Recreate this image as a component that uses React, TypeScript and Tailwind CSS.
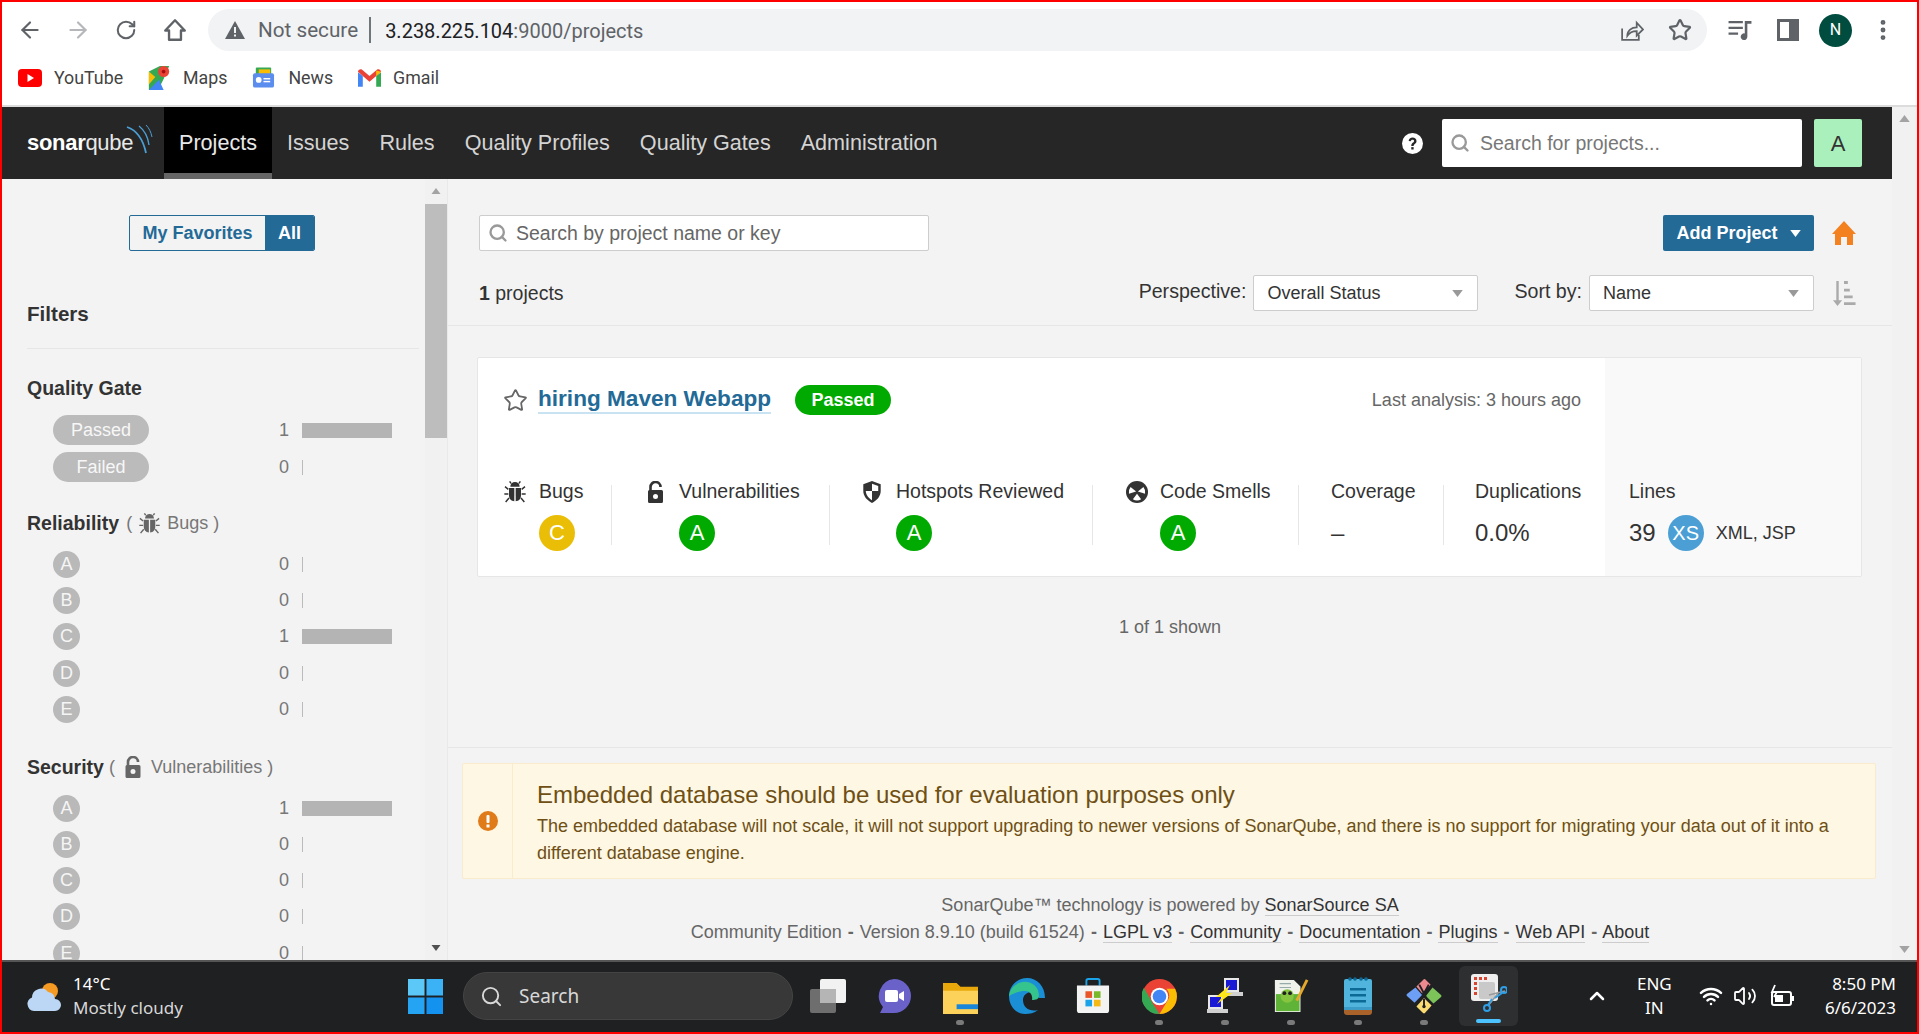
import React from "react";
import { ArrowLeft, ArrowRight, RotateCw, Star, Search, ChevronUp, Volume2, Wifi, MoreVertical } from "lucide-react";

const Tri = ({ up = false, className = "" }: { up?: boolean; className?: string }) => (
  <svg viewBox="0 0 12 8" className={className}><path d={up ? "M6 0l6 8H0z" : "M0 0h12L6 8z"} fill="currentColor" /></svg>
);

const BugIcon = ({ className = "" }: { className?: string }) => (
  <svg viewBox="0 0 18 18" className={className} fill="currentColor">
    <path d="M5.5 5a3.5 3.5 0 0 1 7 0z" />
    <path d="M4.5 6h4v10c-2.4-.2-4-1.8-4-4.500z" />
    <path d="M9.500 6h4v5.500c0 2.700-1.600 4.300-4 4.500z" />
    <path d="M4 7L1.500 5M14 7l2.500-2M4 10.500H1M14 10.500h3M4.500 13.500L2 16.500M13.500 13.500l2.500 3M6 2.500L5 1M12 2.500l1-1.500" stroke="currentColor" strokeWidth="1.100" fill="none" />
  </svg>
);
const LockIcon = ({ className = "" }: { className?: string }) => (
  <svg viewBox="0 0 16 22" className={className}>
    <path d="M3 10V6a5 5 0 0 1 10 0" stroke="currentColor" strokeWidth="2.600" fill="none" />
    <path fillRule="evenodd" fill="currentColor" d="M2 9h12a1.500 1.500 0 0 1 1.500 1.500v10A1.500 1.500 0 0 1 14 22H2a1.500 1.500 0 0 1-1.500-1.500v-10A1.500 1.500 0 0 1 2 9zm6 4a2.500 2.500 0 1 0 0 5 2.500 2.500 0 0 0 0-5z" />
  </svg>
);
const ShieldIcon = ({ className = "" }: { className?: string }) => (
  <svg viewBox="0 0 20 24" className={className}>
    <path d="M10 0l9.500 3.500V11c0 6-4.500 10.500-9.500 13C5 21.500.5 17 .5 11V3.500z" fill="currentColor" />
    <path d="M10 3l6.800 2.500V11H10zM10 11v10C6.500 19 3.500 15.500 3.200 11z" fill="#fff" />
  </svg>
);
const SmellIcon = ({ className = "" }: { className?: string }) => (
  <svg viewBox="0 0 24 24" className={className}>
    <circle cx="12" cy="12" r="12" fill="currentColor" />
    <path d="M11 11.500L3.200 14A9 9 0 0 1 5 6.500zM13 11.500L20.800 14A9 9 0 0 0 19 6.500zM12 14L7.500 20a9 9 0 0 0 9 0z" fill="#fff" />
  </svg>
);
const SortIcon = ({ className = "" }: { className?: string }) => (
  <svg viewBox="0 0 24 26" className={className} fill="currentColor">
    <path d="M4 0h2.500v20H10l-4.700 6L.5 20H4z" />
    <path d="M12 0h4v3h-4zM12 8h6v3h-6zM12 15h9v3h-9zM12 22h12v3H12z" />
  </svg>
);
const QMark = ({ className = "" }: { className?: string }) => (
  <svg viewBox="0 0 22 22" className={className}>
    <circle cx="11" cy="11" r="11" fill="#fff" />
    <path d="M7 8.500C7 6 9 4.700 11 4.700c2.400 0 4.200 1.400 4.200 3.700 0 3-3 3-3 5.300H9.700c0-3.500 3-3.500 3-5.200 0-1-.8-1.500-1.700-1.500-1 0-1.700.6-1.800 1.700z" fill="#262626" />
    <rect x="9.700" y="14.800" width="2.500" height="2.500" fill="#262626" />
  </svg>
);

const Rating = ({ l, c = "bg-[#00aa00]" }: { l: string; c?: string }) => (
  <span className={`flex h-9 w-9 items-center justify-center rounded-full text-[22px] leading-none text-white ${c}`}>{l}</span>
);

const Facet = ({ label, n }: { label: React.ReactNode; n: number }) => (
  <div className="flex h-[36.200px] items-center pl-[26px]">
    <div className="w-[222px]">{label}</div>
    <span className="w-[14px] text-right text-[18px] text-[#777]">{n}</span>
    <span className="ml-[13px] flex h-[15px] items-center">
      {n ? <span className="h-[15px] w-[90px] bg-[#b4b4b4]" /> : <span className="h-[15px] w-px bg-[#bbb]" />}
    </span>
  </div>
);
const RatingDot = ({ l }: { l: string }) => (
  <span className="flex h-[27px] w-[27px] items-center justify-center rounded-full bg-[#b9b9b9] text-[18px] text-[#f5f5f5]">{l}</span>
);
const GatePill = ({ t }: { t: string }) => (
  <span className="flex h-[30px] w-[96px] items-center justify-center rounded-full bg-[#bbb] text-[18px] text-[#f7f7f7]">{t}</span>
);

const RatingGroup = ({ counts }: { counts: number[] }) => (
  <div className="mt-[11px]">
    {["A", "B", "C", "D", "E"].map((l, i) => (
      <Facet key={l} label={<RatingDot l={l} />} n={counts[i]} />
    ))}
  </div>
);

const Metric = ({ w, label, icon, value, iconGap = "gap-[14px]", last = false }: { w: string; label: string; icon?: React.ReactNode; value: React.ReactNode; iconGap?: string; last?: boolean }) => (
  <div className={`h-[60px] ${w} ${last ? "" : "border-r border-[#e6e6e6]"}`}>
    <div className={`flex h-[14px] items-center ${iconGap} text-[19.500px] text-[#333]`}>
      {icon}
      <span className="whitespace-nowrap">{label}</span>
    </div>
    <div className="mt-[16px]">{value}</div>
  </div>
);

const FLink = ({ t }: { t: string }) => <span className="border-b border-[#ccc] text-[#333]">{t}</span>;
const Sep = () => <span className="mx-[1px] font-bold">-</span>;

const Icon = ({ children, dot = false }: { children: React.ReactNode; dot?: boolean }) => (
  <div className="relative flex h-[60px] w-[66.200px] items-center justify-center">
    {children}
    {dot && <span className="absolute bottom-[1px] h-[5px] w-[8px] rounded-full bg-[#7a7a7a]" />}
  </div>
);

export default function App() {
  return (
    <div className="flex h-[1034px] w-[1919px] flex-col overflow-hidden border-2 border-[#ff0000] bg-white font-['Liberation_Sans',Arial,sans-serif] text-[#333]">
      {/* Browser chrome */}
      <div className="h-[105px] shrink-0 border-b-2 border-[#dcdcdc] font-['Roboto',sans-serif]">
        <div className="flex h-[49px] items-end">
          <div className="flex h-[42px] w-[206px] items-center text-[#5f6368]">
            <ArrowLeft className="ml-[15px] h-[26px] w-[26px]" strokeWidth={2} />
            <ArrowRight className="ml-[22px] h-[26px] w-[26px] text-[#b5b7ba]" strokeWidth={2} />
            <RotateCw className="ml-[24px] h-[22px] w-[22px]" strokeWidth={2.200} />
            <svg viewBox="0 0 24 24" className="ml-[25px] h-[26px] w-[26px]" fill="none" stroke="currentColor" strokeWidth="2.200" strokeLinejoin="round"><path d="M12 3l9 9.500h-3.500V21h-11v-8.500H3z" /></svg>
          </div>
          <div className="flex h-[42px] w-[1499px] items-center rounded-full bg-[#f1f3f4] pl-[17px]">
            <svg viewBox="0 0 20 18" className="h-[18px] w-[20px] text-[#5f6368]"><path fill="currentColor" d="M10 0l10 18H0z" /><path fill="#f1f3f4" d="M9 6h2v6H9zM9 13.500h2v2H9z" /></svg>
            <span className="ml-[13px] pt-[2px] text-[20.700px] text-[#5f6368]">Not secure</span>
            <span className="ml-[11px] h-[26px] w-[2px] bg-[#70757a]" />
            <span className="ml-[14px] pt-[2px] text-[20px] text-[#202124]">3.238.225.104<span className="text-[#5f6368]">:9000/projects</span></span>
            <div className="ml-auto flex items-center text-[#5f6368]">
              <svg viewBox="0 0 24 24" className="h-[25px] w-[25px]" fill="none" stroke="currentColor" strokeWidth="1.700"><path d="M3 10v11h16v-5" /><path d="M8 17c0-5 4-8 9-8V4.500l6 6.500-6 6v-4.500c-4 0-7 1.500-9 4.500z" /></svg>
              <Star className="ml-[24px] mr-[15px] h-[24px] w-[24px]" strokeWidth={2.200} />
            </div>
          </div>
          <div className="flex h-[42px] flex-1 items-center text-[#5f6368]">
            <svg viewBox="0 0 24 22" className="ml-[21px] h-[21px] w-[24px]" fill="currentColor"><path d="M0 1h15v2.500H0zM0 7h15v2.500H0zM0 13h10v2.500H0z" /><path d="M17 1h7v3h-4.300v13.500a3.500 3.500 0 1 1-2.700-3.400z" /></svg>
            <svg viewBox="0 0 22 22" className="ml-[25px] h-[22px] w-[22px]" fill="currentColor"><path fillRule="evenodd" d="M0 0h22v22H0zM3 3v16h9V3z" /></svg>
            <span className="ml-[20px] flex h-[33px] w-[33px] items-center justify-center rounded-full bg-[#004d40] text-[16px] text-white">N</span>
            <MoreVertical className="ml-[18px] h-[26px] w-[26px]" strokeWidth={2.500} />
          </div>
        </div>
        <div className="flex h-[54px] items-center text-[17.800px] text-[#444]">
          <svg viewBox="0 0 24 18" className="ml-[16px] h-[18px] w-[24px]"><rect width="24" height="18" rx="4" fill="#f00" /><path d="M9.500 5l6.500 4-6.500 4z" fill="#fff" /></svg>
          <span className="ml-[12px]">YouTube</span>
          <svg viewBox="0 0 22 26" className="ml-[25px] h-[24px] w-[22px]"><path d="M0 6l12-6 10 0-6 14-6 12H0z" fill="#34a853" /><path d="M0 26l11-11 5 11z" fill="#4285f4" /><path d="M0 6l7 6L0 20z" fill="#fbbc04" /><circle cx="16" cy="6" r="6" fill="#ea4335" /><circle cx="16" cy="6" r="2" fill="#a50e0e" /></svg>
          <span className="ml-[13px]">Maps</span>
          <svg viewBox="0 0 24 24" className="ml-[25px] h-[24px] w-[23px]"><rect x="4" y="1" width="16" height="8" rx="1" fill="#34a853" /><rect x="7" y="3" width="12" height="7" fill="#fbbc04" /><rect x="1" y="7" width="22" height="15" rx="2" fill="#5b8def" /><rect x="12" y="12" width="7" height="1.500" fill="#fff" /><rect x="12" y="15" width="7" height="1.500" fill="#fff" /><circle cx="7" cy="14" r="3" fill="#fff" /></svg>
          <span className="ml-[13px]">News</span>
          <svg viewBox="0 0 24 18" className="ml-[25px] h-[18px] w-[23px]"><path d="M0 3v15h5V7z" fill="#4285f4" /><path d="M24 3v15h-5V7z" fill="#34a853" /><path d="M0 2.500C0 .5 2.500-.8 4.300.5L12 7l7.700-6.500C21.500-.8 24 .5 24 2.500L19 7l-7 6-7-6z" fill="#ea4335" /><path d="M19 1.200l5 1.300L19 7z" fill="#fbbc04" /></svg>
          <span className="ml-[12px]">Gmail</span>
        </div>
      </div>

      {/* Page */}
      <div className="flex min-h-0 flex-1">
        <div className="flex w-[1890px] flex-col">
          {/* Sonar header */}
          <header className="flex h-[72px] shrink-0 items-stretch bg-[#262626]">
            <div className="relative flex w-[162px] items-center pl-[25px] text-[22px] leading-none tracking-[-0.300px] text-white">
              <span className="font-bold">sonar</span><span className="font-normal text-[#e8e8e8]">qube</span>
              <svg viewBox="0 0 30 34" className="absolute left-[123px] top-[17px] h-[34px] w-[30px]" fill="none" stroke="#4b9fd5"><path d="M2 3c9 3 16 12 19 26" strokeWidth="1.800" /><path d="M14 2c5 4 9 11 10 19" strokeWidth="1.300" /><path d="M21 1c3 3 5 7 6 12" strokeWidth="1" /></svg>
            </div>
            <nav className="flex text-[21.600px] text-[#d4d4d4]">
              <a className="flex w-[108px] items-center justify-center border-b-[6px] border-[#666] bg-black pt-[6px] text-[#e8e8e8]">Projects</a>
              <a className="flex items-center px-[15px]">Issues</a>
              <a className="flex items-center px-[15px]">Rules</a>
              <a className="flex items-center px-[15px]">Quality Profiles</a>
              <a className="flex items-center px-[15px]">Quality Gates</a>
              <a className="flex items-center px-[15px]">Administration</a>
            </nav>
            <div className="ml-auto flex items-center pr-[30px]">
              <QMark className="h-[21px] w-[21px]" />
              <div className="ml-[19px] flex h-[48px] w-[360px] items-center rounded-[2px] bg-white pl-[8px] text-[19.500px] text-[#777]">
                <Search className="h-[20px] w-[20px] text-[#999]" strokeWidth={2.800} />
                <span className="ml-[10px] pt-[1px]">Search for projects...</span>
              </div>
              <div className="ml-[12px] flex h-[48px] w-[48px] items-center justify-center rounded-[2px] bg-[#aaf0bc] text-[22px] text-[#333]">A</div>
            </div>
          </header>

          <div className="flex min-h-0 flex-1 bg-[#f3f3f3]">
            {/* Sidebar */}
            <aside className="flex w-[446px] shrink-0 border-r border-[#e9e9e9]">
              <div className="w-[423px] overflow-hidden pl-[25px] pr-[6px]">
                <div className="ml-[102px] mt-[36px] flex h-[36px] w-[186px] overflow-hidden rounded-[2px] border border-[#236a97] text-[18px] font-bold">
                  <span className="flex w-[135px] items-center justify-center text-[#236a97]">My Favorites</span>
                  <span className="flex flex-1 items-center justify-center bg-[#236a97] text-white">All</span>
                </div>
                <h2 className="mt-[51px] text-[20.600px] font-bold leading-[24px]">Filters</h2>
                <div className="mt-[22px] border-t border-[#e6e6e6]" />
                <h3 className="mt-[27px] text-[19.500px] font-bold leading-[24px]">Quality Gate</h3>
                <div className="mt-[12px] flex flex-col gap-[1px]">
                  <Facet label={<GatePill t="Passed" />} n={1} />
                  <Facet label={<GatePill t="Failed" />} n={0} />
                </div>
                <h3 className="mt-[26px] flex h-[24px] items-center text-[19.500px] font-bold">Reliability
                  <span className="ml-[7px] flex items-center text-[18px] font-normal text-[#777]">( <BugIcon className="mx-[6px] h-[23px] w-[23px] text-[#666]" /> Bugs )</span>
                </h3>
                <RatingGroup counts={[0, 0, 1, 0, 0]} />
                <h3 className="mt-[28px] flex h-[24px] items-center text-[19.500px] font-bold">Security
                  <span className="ml-[5px] flex items-center text-[18px] font-normal text-[#777]">( <LockIcon className="mx-[10px] h-[22px] w-[16px] text-[#666]" /> Vulnerabilities )</span>
                </h3>
                <RatingGroup counts={[1, 0, 0, 0, 0]} />
              </div>
              <div className="flex w-[22px] flex-col items-center bg-[#f1f1f1] text-[#505050]">
                <Tri up className="mt-[9px] h-[6px] w-[10px] text-[#a3a3a3]" />
                <div className="mt-[10px] h-[234px] w-full bg-[#bdbdbd]" />
                <Tri className="mb-[9px] mt-auto h-[6px] w-[10px]" />
              </div>
            </aside>

            {/* Main */}
            <main className="flex min-w-0 flex-1 flex-col">
              <div className="mt-[36px] flex h-[36px] items-center pl-[31px] pr-[36px]">
                <div className="flex h-[36px] w-[450px] items-center rounded-[2px] border border-[#cdcdcd] bg-white pl-[8px] text-[19.500px] text-[#666]">
                  <Search className="h-[20px] w-[20px] text-[#999]" strokeWidth={2.800} />
                  <span className="ml-[8px] pt-[1px]">Search by project name or key</span>
                </div>
                <div className="ml-auto flex h-[36px] w-[151px] items-center justify-center rounded-[2px] bg-[#236a97] pl-[1px] text-[18px] font-bold text-white">
                  Add Project<Tri className="ml-[11px] h-[7px] w-[13px]" />
                </div>
                <svg viewBox="0 0 24 24" className="ml-[18px] h-[24px] w-[24px] text-[#f4811f]" fill="currentColor"><path d="M12 0l12 13h-3v11h-6v-8H9v8H3V13H0z" /></svg>
              </div>
              <div className="mt-[24px] flex h-[36px] items-center pl-[31px] pr-[36px] text-[18px]">
                <span className="pt-[1px] text-[19.500px]"><b>1</b> projects</span>
                <span className="ml-auto -translate-y-[1px] text-[19.600px]">Perspective:</span>
                <div className="ml-[7px] flex h-[36px] w-[225px] items-center justify-between rounded-[2px] border border-[#cdcdcd] bg-white pl-[13px] pr-[13px]"><span className="pt-[1px]">Overall Status</span><Tri className="h-[7px] w-[13px] text-[#999]" /></div>
                <span className="ml-[36px] -translate-y-[1px] text-[19.600px]">Sort by:</span>
                <div className="ml-[7px] flex h-[36px] w-[225px] items-center justify-between rounded-[2px] border border-[#cdcdcd] bg-white pl-[13px] pr-[13px]"><span className="pt-[1px]">Name</span><Tri className="h-[7px] w-[13px] text-[#999]" /></div>
                <SortIcon className="ml-[18px] h-[25px] w-[24px] text-[#aaa]" />
              </div>
              <div className="mt-[14px] border-t border-[#e6e6e6]" />

              {/* Card */}
              <div className="ml-[29px] mr-[30px] mt-[31px] flex h-[220px] rounded-[2px] border border-[#e6e6e6] bg-white">
                <div className="w-[1127px] pl-[25px] pr-[24px]">
                  <div className="mt-[27px] flex h-[30px] items-center">
                    <Star className="h-[25px] w-[25px] text-[#666]" strokeWidth={1.700} />
                    <span className="ml-[10px] border-b-2 border-[#cae3f2] text-[22.600px] font-bold leading-[26px] text-[#236a97]">hiring Maven Webapp</span>
                    <span className="ml-[24px] flex h-[30px] w-[96px] items-center justify-center rounded-full bg-[#00aa00] text-[18px] font-bold text-white">Passed</span>
                    <span className="ml-auto text-[18px] text-[#666]">Last analysis: 3 hours ago</span>
                  </div>
                  <div className="mt-[70px] flex">
                    <Metric w="w-[109px]" iconGap="gap-[12px]" label="Bugs" icon={<BugIcon className="h-[24px] w-[24px] text-[#333]" />} value={<div className="ml-[36px]"><Rating l="C" c="bg-[#eabe06]" /></div>} />
                    <div className="w-[35px]" />
                    <Metric w="w-[183px]" iconGap="gap-[15px]" label="Vulnerabilities" icon={<LockIcon className="h-[22px] w-[17px] text-[#333]" />} value={<div className="ml-[32px]"><Rating l="A" /></div>} />
                    <div className="w-[32px]" />
                    <Metric w="w-[231px]" label="Hotspots Reviewed" icon={<ShieldIcon className="h-[22px] w-[20px] text-[#333]" />} value={<div className="ml-[34px]"><Rating l="A" /></div>} />
                    <div className="w-[33px]" />
                    <Metric w="w-[173px]" iconGap="gap-[12px]" label="Code Smells" icon={<SmellIcon className="h-[22px] w-[22px] text-[#333]" />} value={<div className="ml-[34px]"><Rating l="A" /></div>} />
                    <div className="w-[32px]" />
                    <Metric w="w-[113px]" label="Coverage" value={<span className="text-[24px] leading-[36px]">–</span>} />
                    <div className="w-[31px]" />
                    <Metric w="w-[106px]" last label="Duplications" value={<span className="text-[24px] leading-[36px]">0.0%</span>} />
                  </div>
                </div>
                <div className="flex-1 bg-[#f9f9f9] pl-[24px]">
                  <div className="mt-[127px] flex h-[14px] items-center text-[19.500px]">Lines</div>
                  <div className="mt-[16px] flex items-center">
                    <span className="text-[24px] leading-[36px]">39</span>
                    <span className="ml-[12px] flex h-9 w-9 items-center justify-center rounded-full bg-[#4b9fd5] text-[20px] text-white">XS</span>
                    <span className="ml-[12px] text-[18px]">XML, JSP</span>
                  </div>
                </div>
              </div>

              <div className="mt-[40px] text-center text-[18px] leading-[20px] text-[#666]">1 of 1 shown</div>
              <div className="mt-[110px] border-t border-[#e6e6e6]" />

              {/* Warning */}
              <div className="ml-[14px] mr-[16px] mt-[15px] flex h-[116px] rounded-[2px] border border-[#faebcc] bg-[#fdf7e3] text-[#6f4f14]">
                <div className="flex w-[50px] items-center justify-center border-r border-[#faebcc]">
                  <svg viewBox="0 0 20 20" className="h-[20px] w-[20px]"><circle cx="10" cy="10" r="10" fill="#e07b1a" /><rect x="8.500" y="4" width="3" height="8" rx="1" fill="#fff" /><rect x="8.500" y="13.500" width="3" height="3" fill="#fff" /></svg>
                </div>
                <div className="min-w-0 flex-1 pl-[24px] pr-[30px] pt-[16px]">
                  <div className="text-[24px] leading-[30px]">Embedded database should be used for evaluation purposes only</div>
                  <div className="mt-[3px] text-[18px] leading-[27px]">The embedded database will not scale, it will not support upgrading to newer versions of SonarQube, and there is no support for migrating your data out of it into a different database engine.</div>
                </div>
              </div>

              {/* Footer */}
              <div className="mt-[13px] text-center text-[18px] leading-[27px] text-[#666]">
                <div>SonarQube™ technology is powered by <FLink t="SonarSource SA" /></div>
                <div>Community Edition <Sep /> Version 8.9.10 (build 61524) <Sep /> <FLink t="LGPL v3" /> <Sep /> <FLink t="Community" /> <Sep /> <FLink t="Documentation" /> <Sep /> <FLink t="Plugins" /> <Sep /> <FLink t="Web API" /> <Sep /> <FLink t="About" /></div>
              </div>
            </main>
          </div>
        </div>
        {/* Page scrollbar */}
        <div className="flex w-[25px] flex-col items-center bg-[#f1f1f1] pt-[8px] text-[#a3a3a3]">
          <Tri up className="h-[7px] w-[11px]" />
          <Tri className="mb-[7px] mt-auto h-[7px] w-[11px]" />
        </div>
      </div>

      {/* Windows taskbar */}
      <div className="flex h-[72px] shrink-0 items-center border-t-2 border-[#555] bg-[#1f2022] pb-[2px] font-['Noto_Sans','Open_Sans',sans-serif] text-white">
        <svg viewBox="0 0 36 30" className="ml-[24px] h-[30px] w-[36px]"><circle cx="24" cy="10" r="8" fill="#f59a23" /><path d="M8 30a7 7 0 0 1-2-13.500A9 9 0 0 1 22 11a8 8 0 0 1 7 7 6 6 0 0 1 0 12z" fill="#bcd7f5" /></svg>
        <div className="ml-[11px] w-[335px] text-[17px] leading-[24px]">
          <div>14°C</div>
          <div className="text-[#d8d8d8]">Mostly cloudy</div>
        </div>
        <svg viewBox="0 0 36 36" className="h-[35px] w-[35px]"><path d="M0 0h17v17H0z" fill="#5cc8f7" /><path d="M19 0h17v17H19z" fill="#3ab2f5" /><path d="M0 19h17v17H0z" fill="#25a4f3" /><path d="M19 19h17v17H19z" fill="#1492f0" /></svg>
        <div className="ml-[20px] flex h-[48px] w-[330px] items-center rounded-full border border-[#444] bg-[#383838] pl-[16px] text-[19px] text-[#d8d8d8]">
          <Search className="h-[23px] w-[23px]" strokeWidth={2} />
          <span className="ml-[16px]">Search</span>
        </div>
        <div className="ml-[2px] flex items-center">
          <Icon><svg viewBox="0 0 36 34" className="h-[34px] w-[36px]"><rect x="0" y="10" width="26" height="24" rx="2" fill="#6e6e6e" /><rect x="10" y="0" width="26" height="24" rx="2" fill="#f2f2f2" /><rect x="10" y="10" width="16" height="14" fill="#b5b5b5" /></svg></Icon>
          <Icon><svg viewBox="0 0 34 34" className="h-[34px] w-[34px]"><path d="M17 0a17 17 0 0 1 0 34H3l3-6A17 17 0 0 1 17 0z" fill="#6b62c9" /><rect x="8" y="11" width="13" height="12" rx="2" fill="#fff" /><path d="M22 15l5-3v10l-5-3z" fill="#fff" /></svg></Icon>
          <Icon dot><svg viewBox="0 0 36 36" className="h-[35px] w-[35px]"><path d="M0 4h14l4 4h18v28H0z" fill="#e8a80c" /><path d="M0 12h36v24H0z" fill="#fcd25b" /><rect x="14" y="26" width="22" height="5" fill="#1a86d9" /></svg></Icon>
          <Icon><svg viewBox="0 0 36 36" className="h-[36px] w-[36px]"><path d="M18 0C8 0 0 8 0 18c0 10 7 18 16 18 5 0 9-1 13-4-8 2-15-2-15-10 0-5 4-8 9-8 4 0 7 2 7 6h6c0-12-8-20-18-20z" fill="#1a8fd6" /><path d="M0 18C1 8 10 3 18 4c7 1 12 6 12 14 0 3-3 4-7 4 1-5-2-9-7-9-7 0-13 3-16 5z" fill="#35c38e" /></svg></Icon>
          <Icon><svg viewBox="0 0 36 38" className="h-[36px] w-[34px]"><path d="M11 8V3a2 2 0 0 1 2-2h10a2 2 0 0 1 2 2v5" fill="none" stroke="#1aa3e8" strokeWidth="2" /><path d="M1 8h34v26a3 3 0 0 1-3 3H4a3 3 0 0 1-3-3z" fill="#f3f3f3" /><rect x="10" y="14" width="7" height="7" fill="#e8562a" /><rect x="19" y="14" width="7" height="7" fill="#78b82a" /><rect x="10" y="23" width="7" height="7" fill="#1aa3e8" /><rect x="19" y="23" width="7" height="7" fill="#f5b915" /></svg></Icon>
          <Icon dot><svg viewBox="0 0 36 36" className="h-[35px] w-[35px]"><circle cx="18" cy="18" r="18" fill="#ea4335" /><path d="M18 36A18 18 0 0 1 2 9l9 16z" fill="#34a853" /><path d="M18 36l9-15c2-3 1-8-2-11h9a18 18 0 0 1-16 26z" fill="#fbbc04" /><circle cx="18" cy="18" r="9" fill="#fff" /><circle cx="18" cy="18" r="7" fill="#4285f4" /></svg></Icon>
          <Icon dot><svg viewBox="0 0 36 36" className="h-[36px] w-[36px]"><rect x="17" y="0" width="15" height="14" fill="#e8e8e8" /><rect x="19" y="2" width="11" height="10" fill="#1a1ad6" /><path d="M15 14h21v4H15z" fill="#d0d0d0" /><rect x="1" y="17" width="15" height="14" fill="#e8e8e8" /><rect x="3" y="19" width="11" height="10" fill="#1a1ad6" /><path d="M0 31h21v4H0z" fill="#d0d0d0" /><path d="M23 7L9 19h6l-5 7 15-11h-6z" fill="#ffe81a" /></svg></Icon>
          <Icon dot><svg viewBox="0 0 38 38" className="h-[36px] w-[36px]"><path d="M2 2h20l7 7v27H2z" fill="#eef2ea" /><path d="M3 17h25v18H3z" fill="#5fb336" /><circle cx="15" cy="19" r="7" fill="#86c540" /><circle cx="12" cy="16" r="2" fill="#1f2022" /><circle cx="18" cy="16" r="2" fill="#1f2022" /><path d="M7 6h12M7 10h12" stroke="#9aa" strokeWidth="1.200" /><path d="M25 24L36 2" stroke="#e5a92a" strokeWidth="3" /></svg></Icon>
          <Icon dot><svg viewBox="0 0 30 38" className="h-[38px] w-[30px]"><rect x="1" y="2" width="28" height="34" rx="2" fill="#50b4dd" /><path d="M1 30h28v5a3 3 0 0 1-3 3H4a3 3 0 0 1-3-3z" fill="#a8622a" /><path d="M1 30h28v3H1z" fill="#3d9cc7" /><rect x="7" y="11" width="16" height="2.500" fill="#0d6a96" /><rect x="7" y="17" width="16" height="2.500" fill="#0d6a96" /><rect x="7" y="23" width="16" height="2.500" fill="#0d6a96" /><circle cx="7" cy="2" r="1.800" fill="#0d6a96" /><circle cx="12" cy="2" r="1.800" fill="#0d6a96" /><circle cx="18" cy="2" r="1.800" fill="#0d6a96" /><circle cx="23" cy="2" r="1.800" fill="#0d6a96" /></svg></Icon>
          <Icon dot><svg viewBox="0 0 38 38" className="h-[36px] w-[36px]"><path d="M11 9l7-7a2 2 0 0 1 3 0l5 5-9 9z" fill="#ec8a8f" /><path d="M10 10l7 8-8 8L1 19a1.500 1.500 0 0 1 0-2z" fill="#6c9ff5" /><path d="M28 10l9 8a1.500 1.500 0 0 1 0 2l-8 7-8-8z" fill="#7cc35a" /><path d="M19 21l8 8-7 8a1.500 1.500 0 0 1-2 0l-7-7z" fill="#fbdc72" /><path d="M14 7l7 13M24 7l-7 13M19 22v7" stroke="#1f2022" strokeWidth="2" fill="none" /><circle cx="19" cy="30" r="1.800" fill="#1f2022" /></svg></Icon>
          <div className="relative ml-[2.500px] flex h-[60px] w-[59px] items-center justify-center rounded-[6px] bg-[#2e2f31]">
            <svg viewBox="0 0 36 38" className="mb-[6px] h-[38px] w-[36px]"><rect x="0" y="0" width="27" height="27" rx="3" fill="#efefef" /><path d="M3 3h3v3H3zM8 3h3v3H8zM13 3h3v3h-3zM3 8h3v3H3zM3 13h3v3H3zM3 18h3v3H3z" fill="#d8442f" /><path d="M8 8h14a2 2 0 0 1 2 2v15H10a2 2 0 0 1-2-2z" fill="#c9c9c9" /><path d="M18 21L34 17M28 18L17 32" stroke="#9a9a9a" strokeWidth="1.500" /><circle cx="33" cy="16" r="3" fill="none" stroke="#2f9fe8" strokeWidth="2" /><circle cx="16" cy="34" r="3" fill="none" stroke="#2f9fe8" strokeWidth="2" /><path d="M24 24l7-5M21 25l-4 6" stroke="#2f9fe8" strokeWidth="2" /></svg>
            <span className="absolute bottom-[3px] h-[4px] w-[25px] rounded-full bg-[#4cc2ff]" />
          </div>
        </div>
        <ChevronUp className="ml-[67px] h-[24px] w-[24px]" strokeWidth={2.500} />
        <div className="ml-[27px] w-[36px] text-center text-[17px] leading-[24px]"><div>ENG</div><div>IN</div></div>
        <Wifi className="ml-[27px] h-[24px] w-[24px]" strokeWidth={2.500} />
        <Volume2 className="ml-[10px] h-[24px] w-[24px]" strokeWidth={1.800} />
        <svg viewBox="0 0 26 24" className="ml-[12px] h-[24px] w-[26px]" fill="none" stroke="#fff" strokeWidth="2"><rect x="3" y="8" width="19" height="13" rx="2" /><rect x="23" y="12" width="2" height="5" fill="#fff" stroke="none" /><rect x="6" y="11" width="8" height="7" fill="#fff" stroke="none" /><path d="M6 1L3 8h5L5 13" strokeWidth="1.800" /></svg>
        <div className="ml-[auto] mr-[21px] text-right text-[17px] leading-[24px]"><div>8:50 PM</div><div>6/6/2023</div></div>
      </div>
    </div>
  );
}
